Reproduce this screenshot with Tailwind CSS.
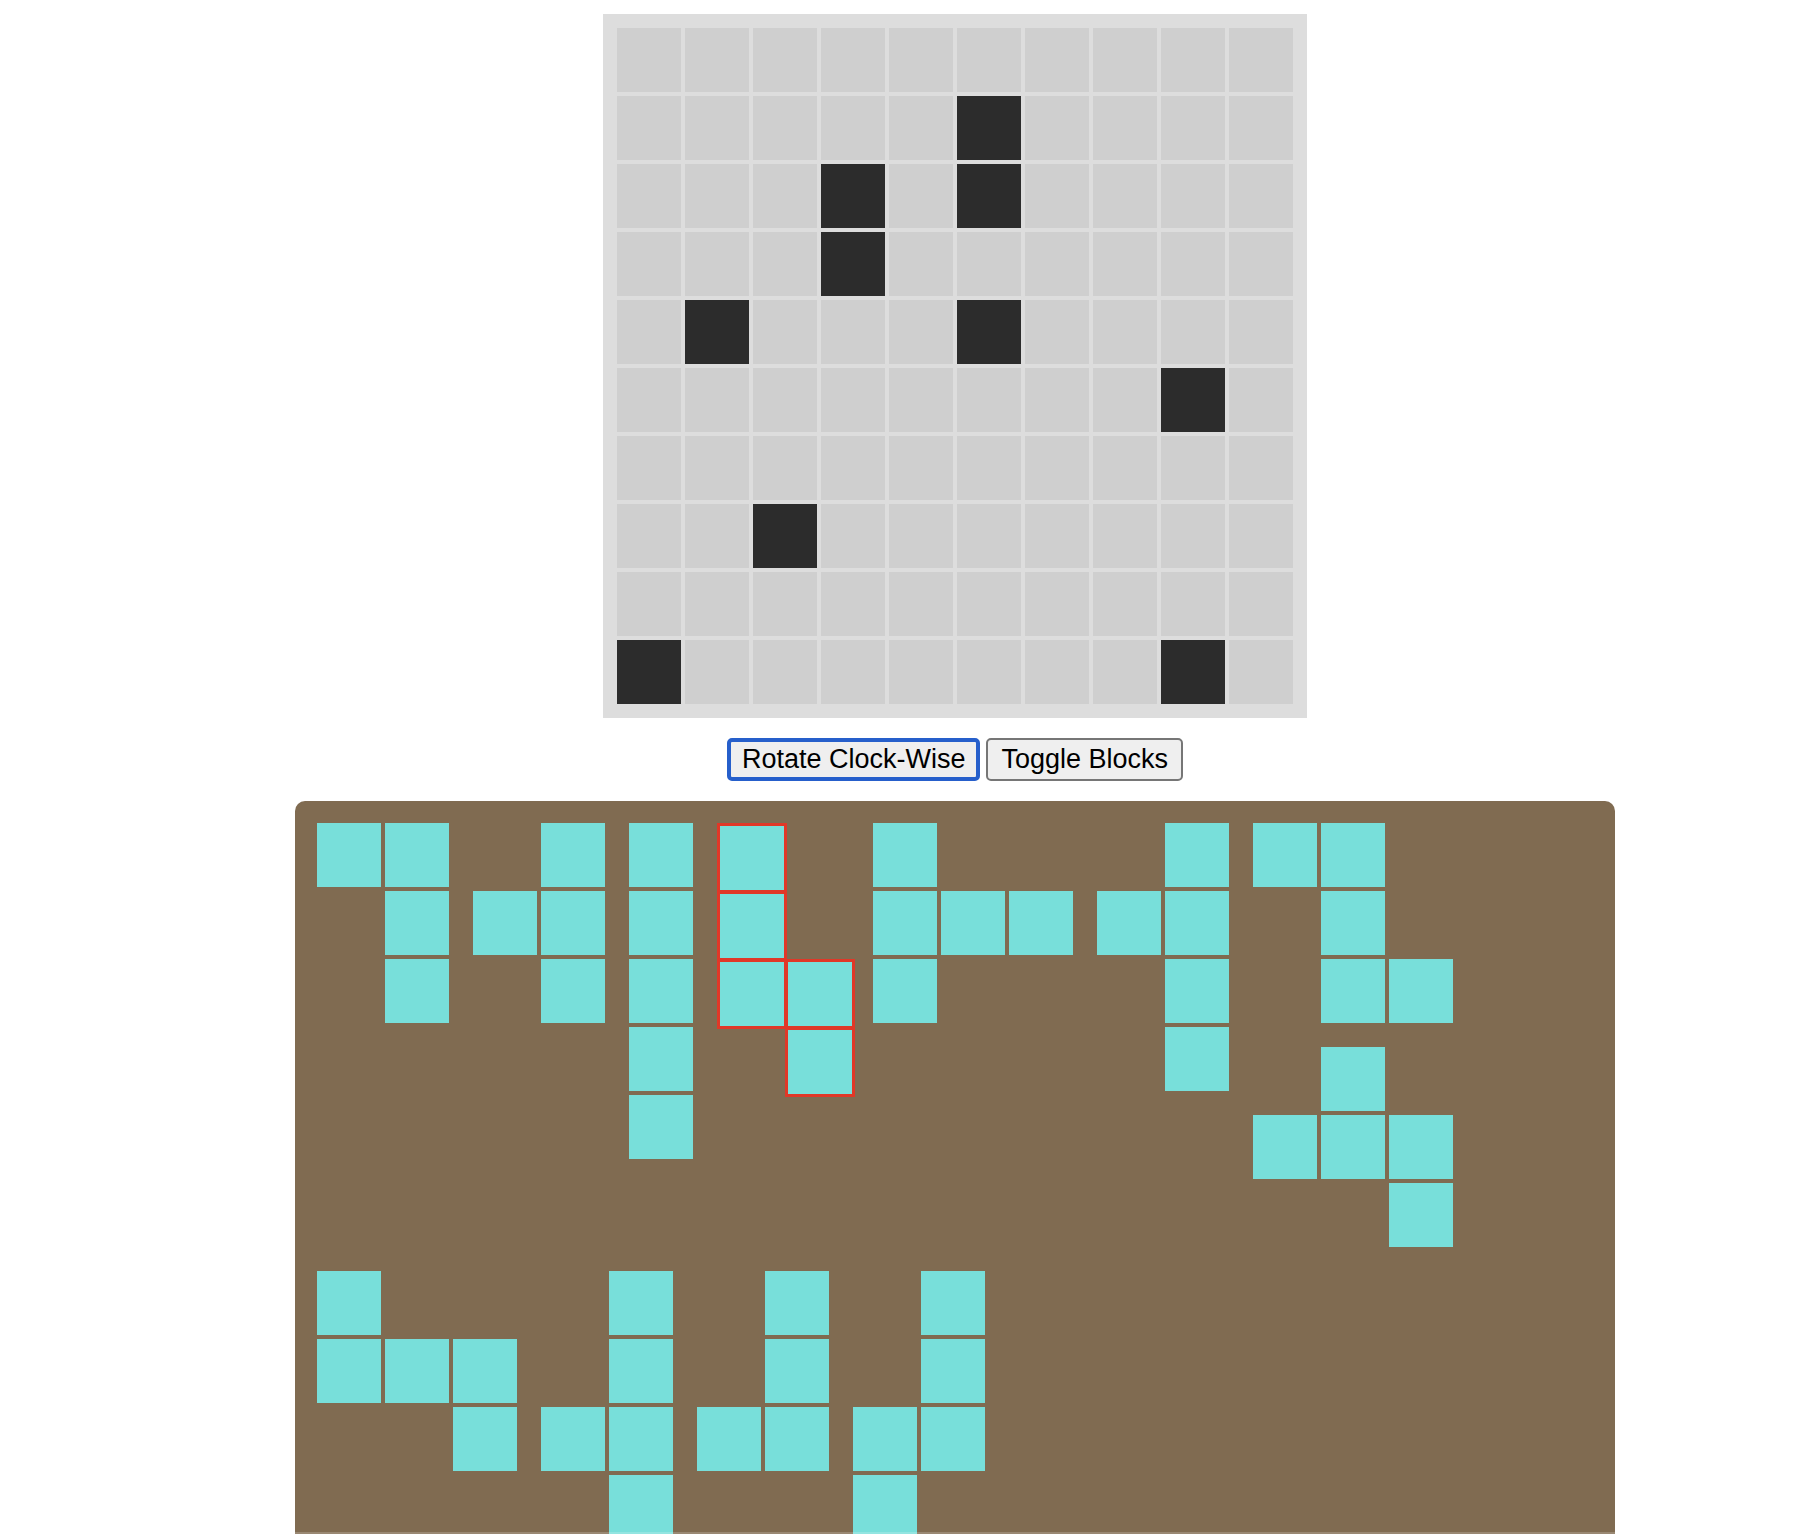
<!DOCTYPE html>
<html lang="en">
<head>
<meta charset="utf-8">
<title>Block Puzzle</title>
<script src="https://cdn.jsdelivr.net/npm/@tailwindcss/browser@4"></script>
</head>
<body class="bg-white font-['Liberation_Sans',Arial,sans-serif] text-black">
<main class="relative flex h-screen flex-col items-center overflow-hidden pt-3.5 pl-26">
  <section id="board" aria-label="Board" class="grid shrink-0 grid-cols-[repeat(10,64px)] gap-1 bg-[#dddddd] p-3.5"></section>
  <div class="my-5 flex shrink-0 gap-1.5">
    <button type="button" class="h-[43px] rounded-[5px] border-4 border-[#265fcb] bg-[#efefef] px-[11px] pb-0.5 text-[27px] leading-8">Rotate Clock-Wise</button>
    <button type="button" class="h-[43px] rounded-[5px] border-2 border-[#767676] bg-[#efefef] px-[13px] pb-0.5 text-[27px] leading-8">Toggle Blocks</button>
  </div>
  <section id="tray" aria-label="Pieces" class="flex min-h-0 w-full max-w-[1320px] flex-1 flex-wrap content-start items-start gap-6 overflow-hidden rounded-t-[10px] bg-[#806b51] p-[22px]"></section>
  <div class="absolute bottom-0 left-0 h-0.5 w-full bg-white/20"></div>
</main>
<script>
const board = [
  '..........',
  '.....#....',
  '...#.#....',
  '...#......',
  '.#...#....',
  '........#.',
  '..........',
  '..#.......',
  '..........',
  '#.......#.',
];
document.getElementById('board').innerHTML = board.join('').split('').map(c =>
  c === '#' ? '<div class="size-16 bg-[#2c2c2c]"></div>' : '<div class="size-16 bg-[#cfcfcf]"></div>').join('');

// Each entry is one stack of pieces; '#' marks a filled square.
const stacks = [
  [['##', '.#', '.#']],
  [['.#', '##', '.#']],
  [['#', '#', '#', '#', '#']],
  [['#.', '#.', '##', '.#']],
  [['#..', '###', '#..']],
  [['.#', '##', '.#', '.#']],
  [['##.', '.#.', '.##'], ['.#.', '###', '..#']],
  [['#..', '###', '..#']],
  [['.#', '.#', '##', '.#']],
  [['.#', '.#', '##']],
  [['.#', '.#', '##', '#.']],
];
const selected = 3;
const columns = { 1: 'grid-cols-[repeat(1,64px)]', 2: 'grid-cols-[repeat(2,64px)]', 3: 'grid-cols-[repeat(3,64px)]' };
const piece = (rows, active) => {
  const filled = active
    ? '<div class="box-content size-16 border-3 border-[#e03828] bg-[#78dfda]"></div>'
    : '<div class="size-16 bg-[#78dfda]"></div>';
  return `<div class="grid auto-rows-[64px] gap-1 ${columns[rows[0].length]}">` +
    rows.join('').split('').map(c => c === '#' ? filled : '<div></div>').join('') + '</div>';
};
document.getElementById('tray').innerHTML = stacks.map((pieces, i) =>
  '<div class="flex flex-col gap-6">' + pieces.map(p => piece(p, i === selected)).join('') + '</div>').join('');
</script>
</body>
</html>
